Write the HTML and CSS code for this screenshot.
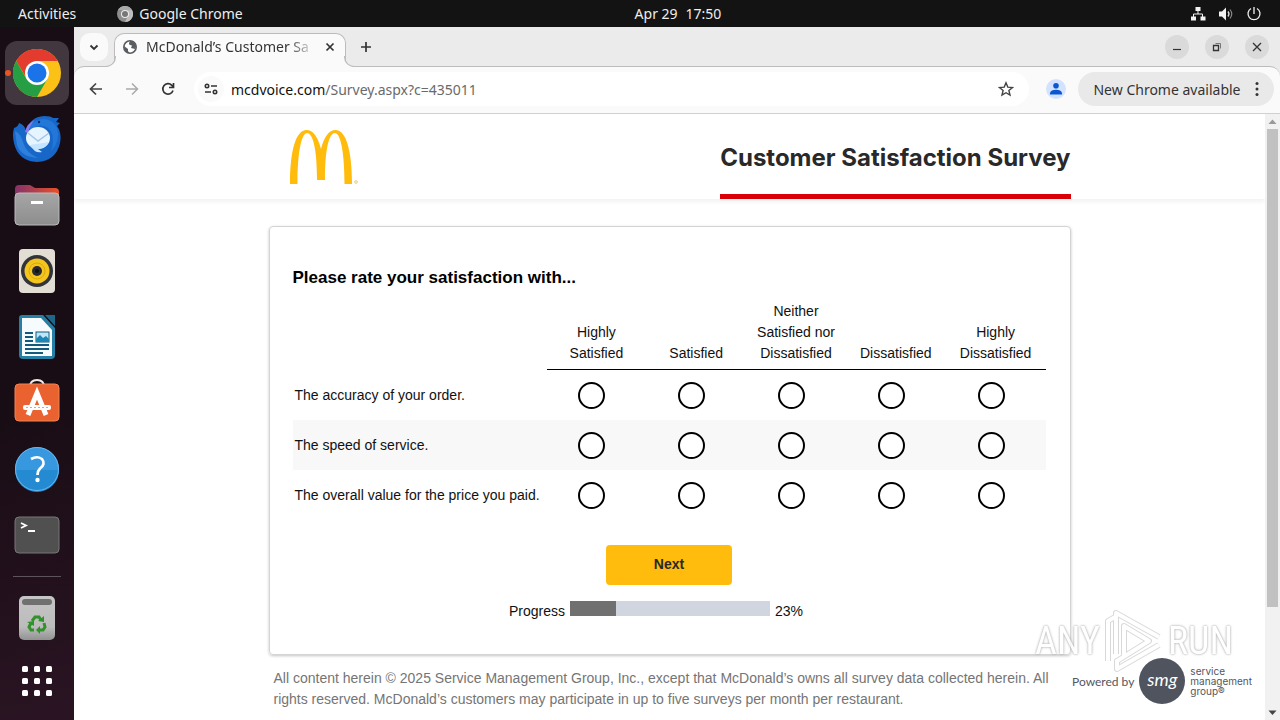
FILE: index.html
```html
<!DOCTYPE html>
<html lang="en">
<head>
<meta charset="utf-8">
<title>McDonald’s Customer Satisfaction Survey</title>
<link rel="stylesheet" href="styles.css">
</head>
<body>
<header class="topbar">
  <div class="topbar-left">
    <button class="bar-button">Activities</button>
    <button class="bar-button">
      <svg width="16" height="16" viewBox="0 0 16 16"><circle cx="8" cy="8" r="8" fill="#8d8d8d"/><path d="M1 4A8 8 0 0 1 15 4H8z" fill="#a9a9a9"/><path d="M8 16A8 8 0 0 0 15 4H10l1 6z" fill="#bdbdbd"/><circle cx="8" cy="8" r="4" fill="#eee"/><circle cx="8" cy="8" r="3" fill="#777"/></svg>
      Google Chrome
    </button>
  </div>
  <button class="bar-button clock"><span>Apr 29</span><span>17:50</span></button>
  <div class="topbar-right">
    <svg width="16" height="16" viewBox="0 0 16 16"><path d="M5.500 1h5v4h-5zM1 10.500h5v4H1zM10.500 10.500h5v4h-5z" fill="#f2f2f2"/><path d="M8 5v3M3.500 11V8h9v3" fill="none" stroke="#f2f2f2"/></svg>
    <svg width="16" height="16" viewBox="0 0 16 16"><path d="M1 5.500h3L8 1.500v13L4 10.500H1z" fill="#f2f2f2"/><path d="M10 5.500q2 2.500 0 5" fill="none" stroke="#ddd" stroke-width="1.300"/><path d="M12 3.500q3.500 4.500 0 9" fill="none" stroke="#888" stroke-width="1.200"/></svg>
    <svg width="16" height="16" viewBox="0 0 16 16" fill="none" stroke="#f2f2f2" stroke-width="1.300"><path d="M5 2.500a6 6 0 1 0 6 0M8 1v7"/></svg>
  </div>
</header>
<div class="desktop">
  <nav class="dock" aria-label="Dock">
    <button class="dock-item active" aria-label="Google Chrome">
      <svg width="48" height="48" viewBox="0 0 48 48"><circle cx="24" cy="24" r="24" fill="#fbc116"/><path d="M3.200 12A24 24 0 0 1 44.800 12H24L14 30z" fill="#e33b2e"/><path d="M3.200 12A24 24 0 0 0 24 48L34.400 30 24 34 13.600 30z" fill="#269e44"/><circle cx="24" cy="24" r="12" fill="#fff"/><circle cx="24" cy="24" r="9.500" fill="#1a73e8"/></svg>
    </button>
    <button class="dock-item" aria-label="Thunderbird">
      <svg width="48" height="48" viewBox="0 0 48 48"><path d="M1 13Q5 12 6 8Q12 10 13 16Q17 2 31 1Q38 1 40 3L46 3L43 7L47 8L44 11Q49 18 47 28Q43 46 24 47Q5 46 1 28Q-1 20 1 13z" fill="#1767c9"/><path d="M14 15Q18 6 29 4Q40 4 44 13Q48 26 38 36Q43 20 35 13Q28 8 20 13z" fill="#2277d9"/><path d="M2 16Q8 19 10 27Q13 38 25 43Q8 42 4 30z" fill="#2f80dd"/><path d="M12 17Q14 8 22 5Q17 9 15 18z" fill="#8e7bea"/><ellipse cx="25" cy="23" rx="12" ry="11" fill="#e6f4ff"/><path d="M17 30Q22 39 29 37L25 34Q33 33 36 27z" fill="#c5e4ff"/><path d="M15 18L25 26 36 18" fill="none" stroke="#a3c5e6" stroke-width="1.400"/><circle cx="26" cy="7" r="1.200" fill="#0b2d68"/></svg>
    </button>
    <button class="dock-item" aria-label="Files">
      <svg width="46" height="42" viewBox="0 0 46 42"><defs><linearGradient id="fold"><stop stop-color="#85326b"/><stop offset="1" stop-color="#ea5127"/></linearGradient><linearGradient id="grey" x2="0" y2="1"><stop stop-color="#a6a6a6"/><stop offset="1" stop-color="#8d8d8d"/></linearGradient></defs><path d="M1 5Q1 1 5 1H16L21 4H41Q45 4 45 8V20H1z" fill="url(#fold)"/><rect x="1" y="9" width="44" height="32" rx="4" fill="url(#grey)" stroke="#bbb"/><rect x="17" y="17" width="12" height="3" fill="#fff"/></svg>
    </button>
    <button class="dock-item" aria-label="Rhythmbox">
      <svg width="38" height="46" viewBox="0 0 38 46"><rect x="1" y="1" width="36" height="44" rx="4" fill="#e3ded4"/><circle cx="19" cy="23" r="16" fill="#33343a"/><circle cx="19" cy="23" r="12.500" fill="#f4c51d"/><circle cx="19" cy="23" r="8" fill="none" stroke="#dca90c"/><circle cx="19" cy="23" r="5" fill="#292a31"/><circle cx="19" cy="23" r="2" fill="#111"/></svg>
    </button>
    <button class="dock-item" aria-label="LibreOffice Writer">
      <svg width="38" height="46" viewBox="0 0 38 46"><path d="M4 1H25L37 14V41Q37 45 33 45H5Q1 45 1 41V4Q1 1 4 1z" fill="#267fa4"/><path d="M4 4H23L34 16V42H4z" fill="#f6fbfd"/><path d="M27 1H37V12z" fill="#1f668b"/><path d="M7 19h8M7 23h8M7 27h8M7 31h24M7 35h24M7 39h18" stroke="#135a7c" stroke-width="2"/><rect x="18" y="18" width="13" height="10" fill="#bfe6f8" stroke="#135a7c"/><path d="M18 28V25L22 21L25 24L28 22L31 25V28z" fill="#1c86b4"/></svg>
    </button>
    <button class="dock-item" aria-label="Ubuntu Software">
      <svg width="46" height="48" viewBox="0 0 46 48"><path d="M16 8Q16 1 23 1T30 8" fill="none" stroke="#f2e8e2" stroke-width="2"/><rect x="1" y="5" width="44" height="37" rx="4" fill="#e9622f" stroke="#f18456"/><path d="M14 36L23 14L32 36" fill="none" stroke="#fff" stroke-width="5"/><rect x="9" y="26" width="28" height="5" rx="2" fill="#fff"/><path d="M12 28.500H34" stroke="#e8a182" stroke-dasharray="2"/></svg>
    </button>
    <button class="dock-item" aria-label="Help">
      <svg width="46" height="46" viewBox="0 0 46 46"><circle cx="23" cy="23" r="22" fill="#3798df"/><path d="M1 24A22 22 0 0 0 45 24z" fill="#248ad2"/><circle cx="23" cy="23" r="21.500" fill="none" stroke="#69b5eb"/><path d="M17 13Q23 9.500 28 13Q32 18 26 22.500Q23.500 25 23.500 29" fill="none" stroke="#fff" stroke-width="2.700"/><circle cx="23.500" cy="34" r="2.200" fill="#fff"/></svg>
    </button>
    <button class="dock-item" aria-label="Terminal">
      <svg width="46" height="38" viewBox="0 0 46 38"><rect x="1" y="1" width="44" height="36" rx="4" fill="#505050" stroke="#777"/><path d="M7 7L12 9.500 7 12M14 15H21" fill="none" stroke="#fff" stroke-width="1.800"/></svg>
    </button>
    <hr class="dock-line">
    <button class="dock-item" aria-label="Trash">
      <svg width="38" height="46" viewBox="0 0 38 46"><defs><linearGradient id="bin" x2="0" y2="1"><stop stop-color="#c5c5c5"/><stop offset=".7" stop-color="#bcbcbc"/><stop offset="1" stop-color="#929292"/></linearGradient></defs><rect x="1" y="1" width="36" height="44" rx="5" fill="url(#bin)"/><rect x="4" y="4" width="30" height="6" rx="3" fill="#707070"/><path d="M14 26L17 22H21L23 25M26 28L27 32L25 35H21M16 35H13L11 32L13 28" fill="none" stroke="#32912b" stroke-width="3"/><path d="M26 21V27L20 26zM22 31V39L18 35zM9 27L16 26L16 31z" fill="#32912b"/></svg>
    </button>
    <button class="dock-item apps" aria-label="Show Applications">
      <svg width="30" height="30" viewBox="0 0 30 30" fill="#fff"><rect width="6" height="6" rx="1.500"/><rect x="12" width="6" height="6" rx="1.500"/><rect x="24" width="6" height="6" rx="1.500"/><rect y="12" width="6" height="6" rx="1.500"/><rect x="12" y="12" width="6" height="6" rx="1.500"/><rect x="24" y="12" width="6" height="6" rx="1.500"/><rect y="24" width="6" height="6" rx="1.500"/><rect x="12" y="24" width="6" height="6" rx="1.500"/><rect x="24" y="24" width="6" height="6" rx="1.500"/></svg>
    </button>
  </nav>
  <div class="window">
    <div class="tabstrip">
      <button class="tab-search" aria-label="Search tabs"><svg width="10" height="10" viewBox="0 0 10 10" fill="none" stroke="#333" stroke-width="1.800"><path d="M1.500 3.500L5 7l3.500-3.500"/></svg></button>
      <div class="tab">
        <svg width="14" height="14" viewBox="0 0 14 14"><circle cx="7" cy="7" r="6.200" fill="#fff" stroke="#5a5d61" stroke-width="1.600"/><path d="M1 6L5 9V11L7 13.500Q1 13 1 6zM7 1Q5 4 7 5L9 5.500 8 8 12 9Q14 6 13 4L10 1z" fill="#5a5d61"/></svg>
        <span class="tab-title">McDonald’s Customer Sa</span>
        <button class="tab-close" aria-label="Close tab"><svg width="10" height="10" viewBox="0 0 10 10" stroke="#333" stroke-width="1.700"><path d="M1.500 1.500l7 7M8.500 1.500l-7 7"/></svg></button>
      </div>
      <button class="new-tab" aria-label="New tab"><svg width="12" height="12" viewBox="0 0 12 12" stroke="#333" stroke-width="1.700"><path d="M6 1v10M1 6h10"/></svg></button>
      <div class="window-controls">
        <button class="control" aria-label="Minimize"><svg width="10" height="10" viewBox="0 0 10 10"><path d="M1 7.500h8" stroke="#333" stroke-width="1.200"/></svg></button>
        <button class="control" aria-label="Restore"><svg width="10" height="10" viewBox="0 0 10 10" fill="none" stroke="#333"><path d="M1.500 3.500h5v5h-5z" stroke-width="1.300"/><path d="M3.500 1.500h5v5" stroke="#777"/></svg></button>
        <button class="control" aria-label="Close window"><svg width="10" height="10" viewBox="0 0 10 10" stroke="#333" stroke-width="1.300"><path d="M1 1l8 8M9 1l-8 8"/></svg></button>
      </div>
    </div>
    <div class="toolbar">
      <button class="nav-button" aria-label="Back"><svg width="14" height="14" viewBox="0 0 14 14" fill="none" stroke="#444" stroke-width="1.700"><path d="M13 7H2M7 1.500L1.500 7 7 12.500"/></svg></button>
      <button class="nav-button" aria-label="Forward"><svg width="14" height="14" viewBox="0 0 14 14" fill="none" stroke="#aaa" stroke-width="1.500"><path d="M1 7h11M7 1.500L12.500 7 7 12.500"/></svg></button>
      <button class="nav-button" aria-label="Reload"><svg width="14" height="14" viewBox="0 0 14 14" fill="none" stroke="#333" stroke-width="1.700"><path d="M12 8.500A5.200 5.200 0 1 1 10.800 3.300L12.500 5M12.500 1v4.500H8"/></svg></button>
      <div class="omnibox">
        <button class="site-info" aria-label="Site information"><svg width="14" height="12" viewBox="0 0 14 12" fill="none" stroke="#333" stroke-width="1.600"><circle cx="3" cy="3" r="1.700"/><path d="M7 3h6M1 9h6"/><circle cx="11" cy="9" r="1.700"/></svg></button>
        <span class="url"><span class="host">mcdvoice.com</span>/Survey.aspx?c=435011</span>
        <button class="star" aria-label="Bookmark"><svg width="16" height="16" viewBox="0 0 16 16" fill="none" stroke="#444" stroke-width="1.400"><path d="M8 1.800l1.800 4.300 4.700.4-3.600 3 1.100 4.600L8 11.700l-4 2.400 1.100-4.600-3.600-3 4.700-.4z"/></svg></button>
      </div>
      <button class="profile" aria-label="Profile"><svg width="20" height="20" viewBox="0 0 20 20"><circle cx="10" cy="10" r="10" fill="#d3e3fd"/><circle cx="10" cy="6.800" r="2.800" fill="#0b57d0"/><path d="M4 15.500V14Q5 10.800 10 10.800T16 14V15.500z" fill="#0b57d0"/></svg></button>
      <button class="update">New Chrome available <svg width="4" height="16" viewBox="0 0 4 16" fill="#333"><circle cx="2" cy="2.500" r="1.500"/><circle cx="2" cy="8" r="1.500"/><circle cx="2" cy="13.500" r="1.500"/></svg></button>
    </div>
    <div class="viewport">
      <main class="page">
        <div class="site-header">
          <div class="container header-row">
            <svg class="logo" width="70" height="56" viewBox="0 0 70 56" role="img" aria-label="McDonald’s"><path d="M1 55C1 21 7 1 17.500 1C24 1 29 8 32 20C35 8 40 1 46.500 1C57 1 63 21 63 55H55.500C55.500 23 51.500 4 46 4C40 4 36 20 36 51H28C28 20 24 4 18 4C12.500 4 8.500 23 8.500 55z" fill="#ffbc0d"/><circle cx="67" cy="53" r="1.300" fill="none" stroke="#e8c97c"/></svg>
            <h1 class="site-title">Customer Satisfaction Survey</h1>
          </div>
        </div>
        <div class="container">
          <form class="card">
            <h2 class="question">Please rate your satisfaction with...</h2>
            <table class="ratings">
              <thead>
                <tr><td class="label-col"></td><th scope="col">Highly Satisfied</th><th scope="col">Satisfied</th><th scope="col">Neither Satisfied nor Dissatisfied</th><th scope="col">Dissatisfied</th><th scope="col">Highly Dissatisfied</th></tr>
              </thead>
              <tbody>
                <tr><th scope="row">The accuracy of your order.</th>
                  <td><input type="radio" name="accuracy" aria-label="Highly Satisfied"></td><td><input type="radio" name="accuracy" aria-label="Satisfied"></td><td><input type="radio" name="accuracy" aria-label="Neither Satisfied nor Dissatisfied"></td><td><input type="radio" name="accuracy" aria-label="Dissatisfied"></td><td><input type="radio" name="accuracy" aria-label="Highly Dissatisfied"></td></tr>
                <tr><th scope="row">The speed of service.</th>
                  <td><input type="radio" name="speed" aria-label="Highly Satisfied"></td><td><input type="radio" name="speed" aria-label="Satisfied"></td><td><input type="radio" name="speed" aria-label="Neither Satisfied nor Dissatisfied"></td><td><input type="radio" name="speed" aria-label="Dissatisfied"></td><td><input type="radio" name="speed" aria-label="Highly Dissatisfied"></td></tr>
                <tr><th scope="row">The overall value for the price you paid.</th>
                  <td><input type="radio" name="value" aria-label="Highly Satisfied"></td><td><input type="radio" name="value" aria-label="Satisfied"></td><td><input type="radio" name="value" aria-label="Neither Satisfied nor Dissatisfied"></td><td><input type="radio" name="value" aria-label="Dissatisfied"></td><td><input type="radio" name="value" aria-label="Highly Dissatisfied"></td></tr>
              </tbody>
            </table>
            <button class="next" type="button">Next</button>
            <div class="progress-row">
              <label for="progress">Progress</label>
              <progress id="progress" max="100" value="23"></progress>
              <span>23%</span>
            </div>
          </form>
          <p class="legal">All content herein © 2025 Service Management Group, Inc., except that McDonald’s owns all survey data collected herein. All rights reserved. McDonald’s customers may participate in up to five surveys per month per restaurant.</p>
        </div>
        <div class="powered">
          <span>Powered by</span>
          <span class="smg">smg</span>
          <span class="smg-name">service<br>management<br>group®</span>
        </div>
      </main>
      <div class="scrollbar">
        <svg width="15" height="15" viewBox="0 0 15 15"><path d="M3.500 10h8L7.500 5.500z" fill="#999"/></svg>
        <div class="track"><div class="thumb"></div></div>
        <svg width="15" height="15" viewBox="0 0 15 15"><path d="M3.500 5.500h8L7.500 10z" fill="#444"/></svg>
      </div>
    </div>
  </div>
</div>
<div class="watermark">
  <span>ANY</span>
  <svg width="58" height="64" viewBox="0 0 58 64" fill="none" stroke-linejoin="round"><g stroke="#cfcfcf" stroke-width="6"><path d="M3 52V12L10 8M11 45V4L54 28M19 48V17L44 32L12 52V60L54 36"/></g><g stroke="#fff" stroke-width="4"><path d="M3 52V12L10 8M11 45V4L54 28M19 48V17L44 32L12 52V60L54 36"/></g></svg>
  <span>RUN</span>
</div>
</body>
</html>
```
FILE: styles.css
```css
* { box-sizing: border-box; }
html, body { height: 100%; }
body {
  margin: 0;
  display: flex;
  flex-direction: column;
  overflow: hidden;
  font-family: "Noto Sans", "Open Sans", sans-serif;
  font-size: 14px;
  color: #333;
}
button {
  border: 0;
  padding: 0;
  margin: 0;
  background: none;
  font: inherit;
  color: inherit;
  display: flex;
  align-items: center;
  justify-content: center;
}
svg { display: block; flex: none; }

.topbar {
  flex: none;
  height: 27px;
  padding: 0 18px;
  display: grid;
  grid-template-columns: 1fr auto 1fr;
  align-items: center;
  background: #131313;
  color: #eee;
}
.topbar-left { display: flex; gap: 41px; }
.bar-button { gap: 6px; }
.clock { gap: 8px; margin-left: 76px; }
.topbar-right { display: flex; justify-content: flex-end; gap: 12px; }

.desktop { flex: 1; min-height: 0; display: flex; }
.dock {
  flex: none;
  width: 74px;
  padding-top: 14px;
  display: flex;
  flex-direction: column;
  align-items: center;
  gap: 2px;
  background: linear-gradient(165deg, #190d15 55%, #2a1423);
}
.dock-item { flex: none; width: 64px; height: 64px; border-radius: 12px; }
.dock-item.active { position: relative; background: #42373f; }
.dock-item.active::before {
  content: "";
  position: absolute;
  left: 0;
  width: 6px;
  height: 6px;
  border-radius: 50%;
  background: #e95420;
}
.dock-line { width: 48px; height: 1px; margin: 7px 0; border: 0; background: #5d545b; }
.dock-item.apps { height: 58px; }

.window { flex: 1; min-width: 0; display: flex; flex-direction: column; background: #ebebeb; }
.tabstrip { flex: none; height: 39px; padding: 6px 11px 0 6px; display: flex; align-items: flex-start; }
.tab-search { width: 28px; height: 28px; border-radius: 10px; background: #fafafa; }
.tab {
  position: relative;
  z-index: 1;
  width: 232px;
  height: 34px;
  margin-left: 6px;
  padding: 0 9px 8px 8px;
  display: flex;
  align-items: center;
  gap: 9px;
  background: #fafafa;
  border: 1px solid #bcbcbc;
  border-bottom: 0;
  border-radius: 10px 10px 0 0;
}
.tab::before, .tab::after {
  content: "";
  position: absolute;
  bottom: 0;
  width: 11px;
  height: 10px;
  border: 1px solid #bcbcbc;
  border-top: 0;
}
.tab::before {
  left: -11px;
  border-left: 0;
  border-bottom-right-radius: 10px;
  box-shadow: 3px 3px 0 #fafafa;
}
.tab::after {
  right: -11px;
  border-right: 0;
  border-bottom-left-radius: 10px;
  box-shadow: -3px 3px 0 #fafafa;
}
.tab-title {
  flex: 1;
  white-space: nowrap;
  mask-image: linear-gradient(90deg, #000 84%, transparent);
}
.tab-close, .new-tab { width: 12px; height: 28px; }
.new-tab { margin-left: 14px; }
.window-controls { margin-left: auto; display: flex; gap: 16px; padding-top: 2px; }
.control { width: 24px; height: 24px; border-radius: 50%; background: #dadada; }

.toolbar {
  flex: none;
  height: 48px;
  padding: 0 6px 2px 12px;
  display: flex;
  align-items: center;
  background: #fafafa;
  border-top: 1px solid #bcbcbc;
  border-bottom: 1px solid #d0d0d0;
  border-radius: 10px 10px 0 0;
}
.nav-button { width: 20px; height: 34px; margin-right: 16px; }
.omnibox {
  flex: 1;
  height: 34px;
  padding: 0 15px 0 4px;
  display: flex;
  align-items: center;
  gap: 7px;
  border-radius: 17px;
  background: #fff;
}
.site-info { width: 26px; height: 26px; border-radius: 50%; background: #fafafa; }
.url { flex: 1; color: #6a6a6a; white-space: nowrap; }
.host { color: #111; }
.profile { margin: 0 12px 0 17px; }
.update { width: 196px; height: 34px; gap: 14px; border-radius: 17px; background: #e9e9e9; }

.viewport { flex: 1; min-height: 0; display: flex; background: #fff; }
.page {
  flex: 1;
  min-width: 0;
  position: relative;
  overflow: hidden;
  font-family: "Liberation Sans", Arial, sans-serif;
  line-height: 21px;
  color: #111;
}
.container { width: 100%; max-width: 802px; margin: 0 auto; }
.site-header { box-shadow: 0 3px 4px #f3f3f3; }
.header-row { height: 85px; display: flex; justify-content: space-between; align-items: stretch; }
.logo { margin: 15px 0 0 20px; }
.site-title {
  margin: 0;
  padding-top: 29px;
  border-bottom: 5px solid #db0007;
  font-family: Inter, Roboto, sans-serif;
  font-size: 24px;
  line-height: 30px;
  font-weight: 700;
  color: #292929;
}
.card {
  margin-top: 27px;
  padding: 39px 24px 32px 23px;
  border: 1px solid #d4d4d4;
  border-radius: 4px;
  box-shadow: 0 1px 3px #c4c4c4;
}
.question { margin: 0 0 11px; font-size: 17px; line-height: 24px; color: #000; }
.ratings { width: 100%; table-layout: fixed; border-collapse: collapse; }
.ratings .label-col { width: 254px; }
.ratings th { font-weight: 400; }
.ratings thead th { padding: 0 8px 5px; vertical-align: bottom; border-bottom: 1px solid #000; }
.ratings tbody th { padding: 2px 0 0 2px; text-align: left; white-space: nowrap; }
.ratings tbody td { height: 50px; padding: 2px 9px 0 0; text-align: center; }
.ratings tbody tr:nth-child(even) { background: #f8f8f8; }
.ratings input {
  appearance: none;
  display: block;
  width: 27px;
  height: 27px;
  margin: 0 auto;
  border: 2px solid #000;
  border-radius: 50%;
  background: #fff;
}
.next {
  width: 126px;
  height: 40px;
  margin: 25px auto 16px;
  border-radius: 4px;
  background: #ffbc0d;
  font-weight: 700;
  color: #292929;
}
.progress-row { display: flex; justify-content: center; gap: 5px; padding-right: 26px; }
progress { appearance: none; width: 200px; height: 15px; border: 0; background: #d0d5e0; }
progress::-webkit-progress-bar { background: #d0d5e0; }
progress::-webkit-progress-value { background: #707070; }
.legal { margin: 13px 0 0; padding: 0 5px; color: #757575; }

.powered {
  position: absolute;
  right: 13px;
  bottom: 16px;
  display: flex;
  align-items: center;
  gap: 5px;
  font-family: Lato, sans-serif;
  font-size: 12px;
  color: #53565f;
}
.smg {
  width: 46px;
  height: 46px;
  border-radius: 50%;
  background: #50545e;
  color: #fff;
  font-style: italic;
  font-size: 18px;
  line-height: 42px;
  text-align: center;
}
.smg-name { font-family: Inter, sans-serif; font-size: 10px; line-height: 10px; }

.scrollbar { flex: none; width: 15px; display: flex; flex-direction: column; background: #f1f1f1; }
.track { flex: 1; padding: 0 2px; }
.thumb { height: 83%; background: #c1c1c1; }

.watermark {
  position: absolute;
  right: 47px;
  bottom: 47px;
  display: flex;
  align-items: center;
  gap: 5px;
  font-family: "Roboto Condensed", Roboto, "Liberation Sans", sans-serif;
  font-size: 38px;
  font-weight: 400;
  line-height: 40px;
  color: #fff;
  text-shadow: 0 0 2px #999, 0 0 3px #bbb;
  opacity: 0.8;
  pointer-events: none;
}
```
